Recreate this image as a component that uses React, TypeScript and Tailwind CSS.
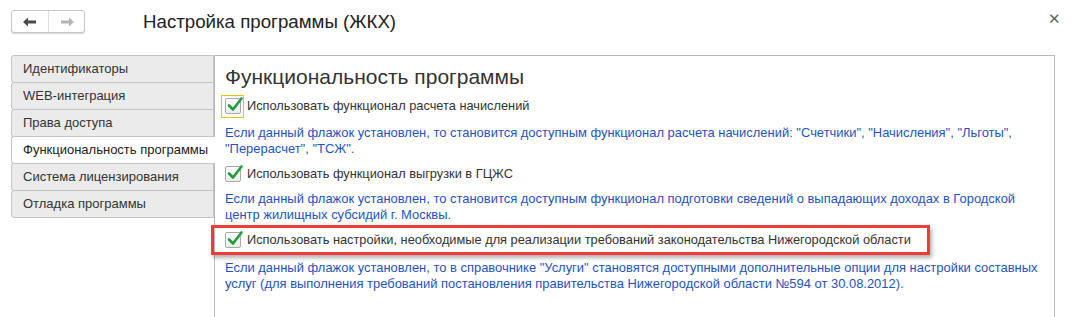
import React from 'react'

const tabs = [
  'Идентификаторы',
  'WEB-интеграция',
  'Права доступа',
  'Функциональность программы',
  'Система лицензирования',
  'Отладка программы',
]

const Check = ({ focused }: { focused?: boolean }) => (
  <div
    className={
      'flex h-[23px] w-[23px] shrink-0 items-center justify-center border ' +
      (focused ? 'border-[#f2c200]' : 'border-transparent')
    }
  >
    <div className="relative h-[16px] w-[16px] rounded-[2px] border border-[#a8a8a8] bg-gradient-to-b from-white to-[#ececec]">
      <svg className="absolute left-[1px] top-[-3px]" width="17" height="17" viewBox="0 0 17 17">
        <path d="M2 9.5 L6 13.5 L14.5 2.5" fill="none" stroke="#1f9c3c" strokeWidth="2.6" strokeLinecap="round" strokeLinejoin="round" />
      </svg>
    </div>
  </div>
)

const Row = ({ label, focused }: { label: string; focused?: boolean }) => (
  <div className="flex h-[22px] items-center gap-[3px] ml-[-4px]">
    <Check focused={focused} />
    <span className="text-[12.8px] text-[#333]">{label}</span>
  </div>
)

const Note = ({ children }: { children: React.ReactNode }) => (
  <p className="text-[12.95px] leading-[16px] text-[#1f52c4]">{children}</p>
)

export default function App() {
  return (
    <div className="flex h-[317px] w-[1072px] flex-col overflow-hidden bg-white font-['Liberation_Sans',Arial,sans-serif] text-[#333]">
      {/* header */}
      <div className="flex h-[55px] items-start">
        <div className="ml-[11px] mt-[10px] flex h-[23px] w-[74px] rounded-[3px] border border-[#c6c6c6] bg-white shadow-[0_1px_1px_rgba(0,0,0,0.15)]">
          <div className="flex w-[37px] items-center justify-center border-r border-[#dcdcdc]">
            <svg width="14" height="10" viewBox="0 0 14 10">
              <path d="M0 5 L5 0.5 L5 3.5 L13 3.5 L13 6.5 L5 6.5 L5 9.5 Z" fill="#4a4a4a" />
            </svg>
          </div>
          <div className="flex flex-1 items-center justify-center">
            <svg width="14" height="10" viewBox="0 0 14 10">
              <path d="M14 5 L9 0.5 L9 3.5 L1 3.5 L1 6.5 L9 6.5 L9 9.5 Z" fill="#b4b4b4" />
            </svg>
          </div>
        </div>
        <h1 className="ml-[58px] mt-[10px] text-[18.7px] leading-[24px] text-[#222]">Настройка программы (ЖКХ)</h1>
        <div className="ml-auto mr-[11px] mt-[13px] text-[15px] leading-[12px] text-[#666]">✕</div>
      </div>

      {/* body */}
      <div className="flex flex-1 pl-[11px] pr-[17px]">
        <div className="flex w-[203px] shrink-0 flex-col">
          {tabs.map((t, i) => {
            const active = i === 3
            return (
              <div
                key={t}
                className={
                  'relative flex h-[28px] items-center rounded-l-[3px] border-b border-l border-t pl-[11px] text-[13px] ' +
                  (active
                    ? 'z-10 mr-[-1px] border-[#c4c4c4] bg-white text-[#222]'
                    : 'border-r border-[#c4c4c4] bg-[#ebebeb] text-[#333]') +
                  (i > 0 ? ' mt-[-1px]' : '')
                }
              >
                {t}
              </div>
            )
          })}
        </div>
        <div className="flex-1 border-l border-r border-t border-[#b8b8b8] pl-[10px]">
          <h2 className="mt-[8px] text-[21px] leading-[26px] text-[#333]">Функциональность программы</h2>
          <div className="mt-[5px]">
            <Row label="Использовать функционал расчета начислений" focused />
          </div>
          <div className="mt-[8px]">
            <Note>
              Если данный флажок установлен, то становится доступным функционал расчета начислений: "Счетчики", "Начисления", "Льготы",
              <br />
              "Перерасчет", "ТСЖ".
            </Note>
          </div>
          <div className="mt-[6px]">
            <Row label="Использовать функционал выгрузки в ГЦЖС" />
          </div>
          <div className="mt-[6px]">
            <Note>
              Если данный флажок установлен, то становится доступным функционал подготовки сведений о выпадающих доходах в Городской
              <br />
              центр жилищных субсидий г. Москвы.
            </Note>
          </div>
          <div className="ml-[-14px] mt-[2px] w-[719px] border-[3px] border-[#ee3b3b] py-[1px] pl-[11px] shadow-[2px_3px_4px_rgba(0,0,0,0.3)]">
            <Row label="Использовать настройки, необходимые для реализации требований законодательства Нижегородской области" />
          </div>
          <div className="mt-[5px]">
            <Note>
              Если данный флажок установлен, то в справочнике "Услуги" становятся доступными дополнительные опции для настройки составных
              <br />
              услуг (для выполнения требований постановления правительства Нижегородской области №594 от 30.08.2012).
            </Note>
          </div>
        </div>
      </div>
    </div>
  )
}
